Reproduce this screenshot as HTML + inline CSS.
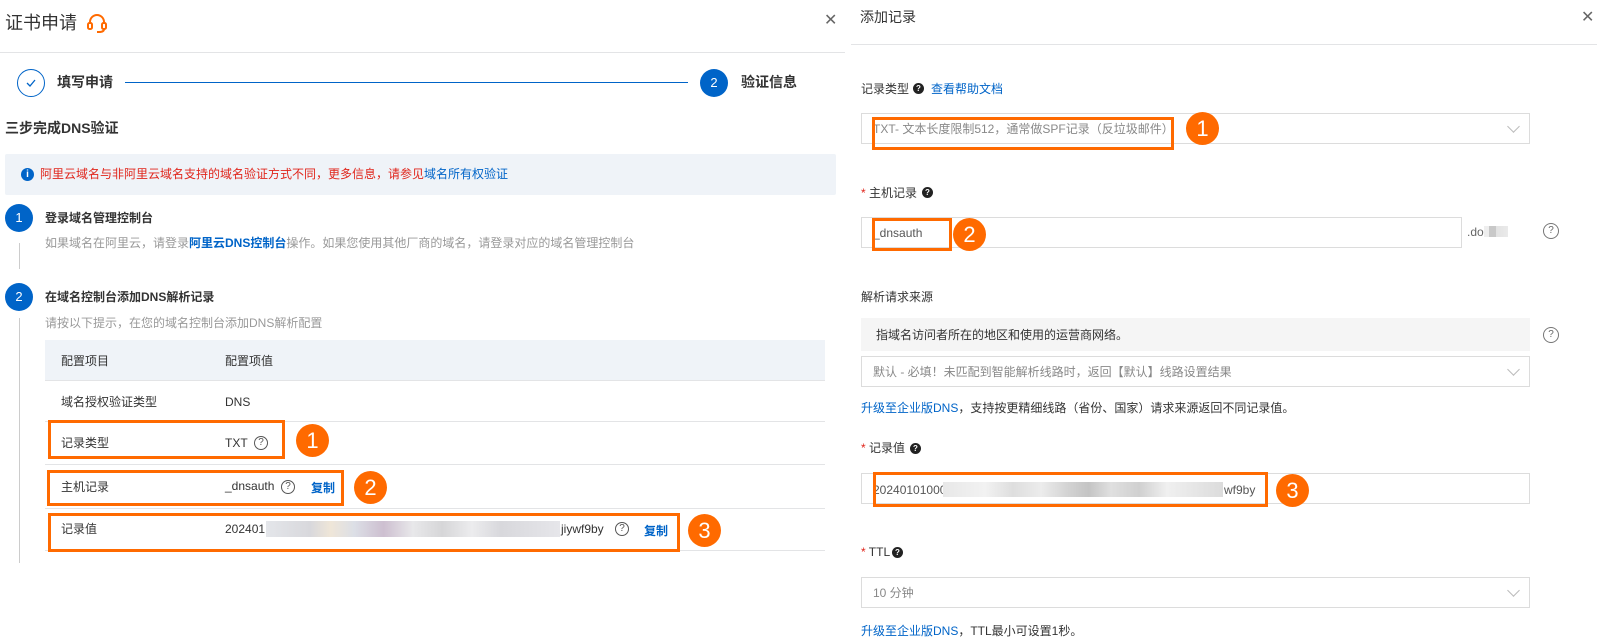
<!DOCTYPE html>
<html><head><meta charset="utf-8"><style>
*{margin:0;padding:0;box-sizing:border-box}
body{width:1597px;height:638px;background:#fff;position:relative;overflow:hidden;font-family:"Liberation Sans","Noto Sans CJK SC",sans-serif;font-size:12px;color:#333}
.a{position:absolute}
.t{position:absolute;white-space:nowrap;line-height:20px}
.b{font-weight:bold}
.blue{color:#0064c8}
.circ{position:absolute;border-radius:50%;text-align:center;color:#fff;background:#0064c8}
.badge{position:absolute;width:33px;height:33px;border-radius:50%;background:#ff6a00;color:#fff;font-size:22px;line-height:33px;text-align:center}
.ob{position:absolute;border:3px solid #ff6a00}
.hl{position:absolute;height:1px;background:#e3e4e6}
.inp{position:absolute;border:1px solid #dcdcdc;background:#fff}
.chev{position:absolute;width:9px;height:9px;border-right:1px solid #bbb;border-bottom:1px solid #bbb;transform:rotate(45deg)}
.q{position:absolute;width:14px;height:14px;border:1px solid #555;border-radius:50%;font-size:10px;line-height:12px;text-align:center;color:#555}
.qd{position:absolute;width:11px;height:11px;border-radius:50%;background:#222;color:#fff;font-size:8px;line-height:11px;text-align:center;font-weight:bold}
.star{color:#e0251b}
</style></head><body>

<!-- LEFT PANEL -->
<div class="t" style="left:5px;top:11px;font-size:18px;line-height:24px;color:#333">证书申请</div>
<svg class="a" style="left:86px;top:12px" width="22" height="22" viewBox="0 0 22 22" fill="none" stroke="#ff6a00" stroke-width="2"><path d="M4 12 V10 a7 7 0 0 1 14 0 V12"/><rect x="2" y="11" width="4" height="6" rx="1.5"/><rect x="16" y="11" width="4" height="6" rx="1.5"/><path d="M18 17 q0 3 -5 3 h-2"/></svg>
<div class="t" style="left:824px;top:11px;font-size:16px;color:#666">✕</div>
<div class="hl" style="left:0;top:52px;width:845px"></div>

<div class="a" style="left:17px;top:69px;width:28px;height:28px;border:1px solid #0064c8;border-radius:50%"></div>
<svg class="a" style="left:24px;top:76px" width="14" height="14" viewBox="0 0 14 14"><path d="M3 7 L6 10 L11 4" stroke="#0064c8" stroke-width="1.3" fill="none"/></svg>
<div class="t b" style="left:57px;top:72px;font-size:14px">填写申请</div>
<div class="a" style="left:125px;top:82px;width:563px;height:1px;background:#0064c8"></div>
<div class="circ" style="left:700px;top:69px;width:28px;height:28px;line-height:28px;font-size:13px">2</div>
<div class="t b" style="left:741px;top:72px;font-size:14px">验证信息</div>

<div class="t b" style="left:5px;top:118px;font-size:14px">三步完成DNS验证</div>

<div class="a" style="left:5px;top:154px;width:831px;height:41px;background:#eff3f8;border-radius:2px"></div>
<div class="circ" style="left:21px;top:168px;width:13px;height:13px;line-height:13px;font-size:10px;font-weight:bold">i</div>
<div class="t" style="left:40px;top:164px;color:#e0251b">阿里云域名与非阿里云域名支持的域名验证方式不同，更多信息，请参见<span class="blue">域名所有权验证</span></div>

<div class="circ" style="left:5px;top:204px;width:28px;height:28px;line-height:28px;font-size:13px">1</div>
<div class="t b" style="left:45px;top:208px">登录域名管理控制台</div>
<div class="t" style="left:45px;top:233px;color:#999">如果域名在阿里云，请登录<span class="blue b">阿里云DNS控制台</span>操作。如果您使用其他厂商的域名，请登录对应的域名管理控制台</div>
<div class="a" style="left:19px;top:243px;width:1px;height:26px;background:#ccc"></div>

<div class="circ" style="left:5px;top:283px;width:28px;height:28px;line-height:28px;font-size:13px">2</div>
<div class="t b" style="left:45px;top:287px">在域名控制台添加DNS解析记录</div>
<div class="t" style="left:45px;top:313px;color:#999">请按以下提示，在您的域名控制台添加DNS解析配置</div>
<div class="a" style="left:19px;top:318px;width:1px;height:245px;background:#ccc"></div>

<div class="a" style="left:45px;top:340px;width:780px;height:40px;background:#eff3f8"></div>
<div class="t" style="left:61px;top:351px">配置项目</div>
<div class="t" style="left:225px;top:351px">配置项值</div>
<div class="hl" style="left:45px;top:380px;width:780px"></div>
<div class="t" style="left:61px;top:392px">域名授权验证类型</div>
<div class="t" style="left:225px;top:392px">DNS</div>
<div class="hl" style="left:45px;top:421px;width:780px"></div>
<div class="t" style="left:61px;top:433px">记录类型</div>
<div class="t" style="left:225px;top:433px">TXT</div>
<div class="q" style="left:254px;top:436px">?</div>
<div class="hl" style="left:45px;top:464px;width:780px"></div>
<div class="t" style="left:61px;top:477px">主机记录</div>
<div class="t" style="left:225px;top:476px">_dnsauth</div>
<div class="q" style="left:281px;top:480px">?</div>
<div class="t b blue" style="left:311px;top:478px">复制</div>
<div class="hl" style="left:45px;top:508px;width:780px"></div>
<div class="t" style="left:61px;top:519px">记录值</div>
<div class="t" style="left:225px;top:519px">202401</div>
<div class="a" style="left:266px;top:521px;width:294px;height:16px;background:linear-gradient(90deg,#e4e6ea 0,#d8d8dc 15%,#efe6d8 22%,#dcdfe6 30%,#cdbfd0 40%,#e8e8ea 50%,#d6d6d8 60%,#ececee 70%,#d8d8dc 80%,#e6e6ea 100%)"></div>
<div class="t" style="left:561px;top:519px">jiywf9by</div>
<div class="q" style="left:615px;top:522px">?</div>
<div class="t b blue" style="left:644px;top:521px">复制</div>
<div class="hl" style="left:45px;top:550px;width:780px"></div>

<div class="ob" style="left:48px;top:420px;width:237px;height:39px"></div>
<div class="ob" style="left:47px;top:470px;width:297px;height:36px"></div>
<div class="ob" style="left:48px;top:513px;width:632px;height:39px"></div>
<div class="badge" style="left:296px;top:424px">1</div>
<div class="badge" style="left:354px;top:471px">2</div>
<div class="badge" style="left:688px;top:514px">3</div>

<!-- RIGHT PANEL -->
<div class="t" style="left:860px;top:7px;font-size:14px">添加记录</div>
<div class="t" style="left:1581px;top:8px;font-size:16px;color:#666">✕</div>
<div class="hl" style="left:851px;top:44px;width:746px"></div>

<div class="t" style="left:861px;top:79px">记录类型</div>
<div class="qd" style="left:913px;top:83px">?</div>
<div class="t blue" style="left:931px;top:79px">查看帮助文档</div>
<div class="inp" style="left:861px;top:113px;width:669px;height:31px"></div>
<div class="t" style="left:873px;top:119px;color:#888">TXT- 文本长度限制512，通常做SPF记录（反垃圾邮件）</div>
<div class="chev" style="left:1509px;top:122px"></div>
<div class="ob" style="left:872px;top:117px;width:302px;height:33px"></div>
<div class="badge" style="left:1186px;top:112px">1</div>

<div class="t" style="left:861px;top:183px"><span class="star">*</span> 主机记录</div>
<div class="qd" style="left:922px;top:187px">?</div>
<div class="inp" style="left:861px;top:217px;width:601px;height:31px"></div>
<div class="t" style="left:873px;top:223px;color:#555">_dnsauth</div>
<div class="t" style="left:1467px;top:222px;color:#666">.do</div>
<div class="a" style="left:1484px;top:226px;width:24px;height:11px;background:linear-gradient(90deg,#eee 0,#eee 20%,#c8c8c8 20%,#c8c8c8 50%,#e2e2e2 50%,#eaeaea 100%)"></div>
<div class="q" style="left:1543px;top:223px;width:16px;height:16px;line-height:14px;color:#666;border-color:#777">?</div>
<div class="ob" style="left:872px;top:218px;width:80px;height:33px"></div>
<div class="badge" style="left:953px;top:218px">2</div>

<div class="t" style="left:861px;top:287px">解析请求来源</div>
<div class="a" style="left:861px;top:318px;width:669px;height:33px;background:#f5f5f5"></div>
<div class="t" style="left:876px;top:325px">指域名访问者所在的地区和使用的运营商网络。</div>
<div class="q" style="left:1543px;top:327px;width:16px;height:16px;line-height:14px;color:#666;border-color:#777">?</div>
<div class="inp" style="left:861px;top:356px;width:669px;height:31px"></div>
<div class="t" style="left:873px;top:362px;color:#888">默认 - 必填！未匹配到智能解析线路时，返回【默认】线路设置结果</div>
<div class="chev" style="left:1509px;top:365px"></div>
<div class="t" style="left:861px;top:398px"><span class="blue">升级至企业版DNS</span>，支持按更精细线路（省份、国家）请求来源返回不同记录值。</div>

<div class="t" style="left:861px;top:438px"><span class="star">*</span> 记录值</div>
<div class="qd" style="left:910px;top:443px">?</div>
<div class="inp" style="left:861px;top:473px;width:669px;height:31px"></div>
<div class="t" style="left:873px;top:480px;color:#555">20240101000</div>
<div class="a" style="left:943px;top:482px;width:280px;height:15px;background:linear-gradient(90deg,#e8e8e8 0,#f2f2f2 15%,#dedede 25%,#ececec 35%,#d2d2d2 45%,#c4c4c4 52%,#e0e0e0 60%,#d0d0d0 70%,#f0f0f0 80%,#dcdcdc 100%)"></div>
<div class="t" style="left:1224px;top:480px;color:#555">wf9by</div>
<div class="ob" style="left:873px;top:472px;width:395px;height:35px"></div>
<div class="badge" style="left:1276px;top:474px">3</div>

<div class="t" style="left:861px;top:542px"><span class="star">*</span> TTL</div>
<div class="qd" style="left:892px;top:547px">?</div>
<div class="inp" style="left:861px;top:577px;width:669px;height:31px"></div>
<div class="t" style="left:873px;top:583px;color:#888">10 分钟</div>
<div class="chev" style="left:1509px;top:586px"></div>
<div class="t" style="left:861px;top:621px"><span class="blue">升级至企业版DNS</span>，TTL最小可设置1秒。</div>

</body></html>
